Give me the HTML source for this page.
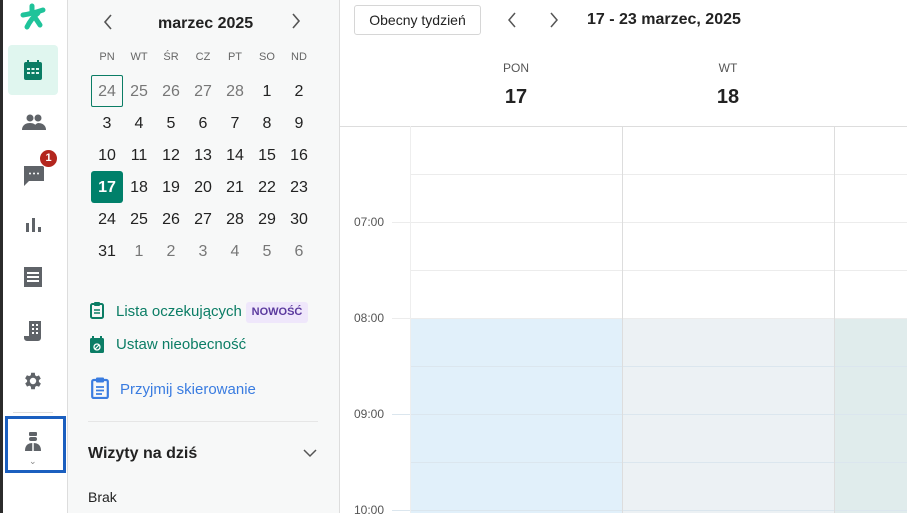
<!DOCTYPE html>
<html><head><meta charset="utf-8"><style>
*{margin:0;padding:0;box-sizing:border-box}
body{width:907px;height:513px;overflow:hidden;font-family:"Liberation Sans",sans-serif;background:#fff;position:relative;color:#222}
.abs{position:absolute}
.side{left:0;top:0;width:68px;height:513px;background:#fff;border-left:3px solid #2b2b2b;border-right:1px solid #ddd}
.panel{left:68px;top:0;width:272px;height:513px;background:#f7f8f8;border-right:1px solid #ddd}
.cal .c{position:absolute;width:32px;text-align:center;font-size:16px}
.cal .hd{font-size:11px;color:#666}
.grey{color:#777}
.hl{position:absolute;left:410px;right:0;height:1px;background:#ececec}
.vl{position:absolute;top:126px;bottom:0;width:1px;background:#ddd}
.t{position:absolute;left:354px;font-size:12px;color:#555}
.ic{position:absolute}
</style></head><body>
<div class="abs side"></div>
<!-- logo -->
<svg class="ic" style="left:19px;top:3px" width="28" height="28" viewBox="0 0 28 28"><g stroke="#1fc39a" stroke-width="5" stroke-linecap="round" fill="none"><path d="M13 3v5"/><path d="M4 12c7-1 14-3 20-5"/><path d="M8 24c3-6 6-10 11-14"/><path d="M17 16l4 6"/></g></svg>
<div class="abs" style="left:8px;top:45px;width:50px;height:50px;background:#e0f6ef;border-radius:4px"></div>
<svg class="ic" style="left:23px;top:59px" width="20" height="22" viewBox="0 0 20 22"><rect x="1" y="3" width="18" height="18" rx="2" fill="#0b7d65"/><rect x="4" y="1" width="2" height="4" fill="#0b7d65"/><rect x="14" y="1" width="2" height="4" fill="#0b7d65"/><g fill="#e0f6ef"><rect x="4" y="9" width="3" height="2"/><rect x="8.5" y="9" width="3" height="2"/><rect x="13" y="9" width="3" height="2"/><rect x="4" y="13" width="3" height="2"/><rect x="8.5" y="13" width="3" height="2"/><rect x="13" y="13" width="3" height="2"/></g></svg>
<svg class="ic" style="left:22px;top:113px" width="24" height="18" viewBox="0 0 24 18"><g fill="#5f6368"><circle cx="8" cy="5" r="3.5"/><circle cx="16" cy="5" r="3.5"/><path d="M0 17c0-5 4-7 8-7s7 2 7 7z"/><path d="M12 17c0-4 1-6 4-7 4 0 8 2 8 7z"/></g></svg>
<svg class="ic" style="left:23px;top:164px" width="22" height="22" viewBox="0 0 22 22"><path d="M1 2h20v15H6l-5 5z" fill="#5f6368"/><g fill="#fff"><circle cx="7" cy="9.5" r="1"/><circle cx="11" cy="9.5" r="1"/><circle cx="15" cy="9.5" r="1"/></g></svg>
<div class="abs" style="left:39px;top:149px;width:19px;height:19px;border-radius:50%;background:#b3261e;border:1.5px solid #fff;color:#fff;font-size:11px;font-weight:bold;text-align:center;line-height:16px">1</div>
<svg class="ic" style="left:25px;top:217px" width="16" height="16" viewBox="0 0 16 16"><g fill="#5f6368"><rect x="1" y="6" width="3" height="9"/><rect x="7" y="1" width="3" height="14"/><rect x="13" y="10" width="3" height="5"/></g></svg>
<svg class="ic" style="left:24px;top:267px" width="18" height="20" viewBox="0 0 18 20"><rect x="0" y="0" width="18" height="20" fill="#5f6368"/><g fill="#fff"><rect x="3" y="5" width="12" height="2"/><rect x="3" y="9" width="12" height="2"/><rect x="3" y="13" width="12" height="2"/></g></svg>
<svg class="ic" style="left:24px;top:320px" width="18" height="22" viewBox="0 0 18 22"><path d="M5 1h12v17a3 3 0 0 1-3 3H3a3 3 0 0 1-3-3v-2h5z" fill="#5f6368"/><g fill="#fff"><rect x="8" y="4" width="2" height="2"/><rect x="12" y="4" width="2" height="2"/><rect x="8" y="8" width="2" height="2"/><rect x="12" y="8" width="2" height="2"/><rect x="8" y="12" width="2" height="2"/><rect x="12" y="12" width="2" height="2"/></g></svg>
<svg class="ic" style="left:22px;top:370px" width="22" height="22" viewBox="0 0 24 24"><path fill="#5f6368" d="M19.4 13a7.5 7.5 0 0 0 0-2l2.1-1.6-2-3.5-2.5 1a7 7 0 0 0-1.7-1L15 3h-4l-.4 2.7a7 7 0 0 0-1.7 1l-2.5-1-2 3.5L6.6 11a7.5 7.5 0 0 0 0 2l-2.1 1.6 2 3.5 2.5-1a7 7 0 0 0 1.7 1L11 21h4l.4-2.7a7 7 0 0 0 1.7-1l2.5 1 2-3.5zM13 15.5a3.5 3.5 0 1 1 0-7 3.5 3.5 0 0 1 0 7z" transform="translate(-1 0)"/></svg>
<div class="abs" style="left:13px;top:412px;width:40px;height:1px;background:#ddd"></div>
<div class="abs" style="left:5px;top:416px;width:61px;height:57px;border:3px solid #1b5fbf"></div>
<svg class="ic" style="left:24px;top:432px" width="18" height="20" viewBox="0 0 18 20"><g fill="#5f6368"><rect x="5" y="0" width="8" height="4" rx="1"/><rect x="5" y="5" width="8" height="4" rx="2"/><path d="M1 19c0-6 3-8 8-8s8 2 8 8z"/></g><path d="M9 11v8" stroke="#fff" stroke-width="1.5"/></svg>
<div class="abs" style="left:29px;top:456px;font-size:9px;color:#888">⌄</div>

<div class="abs panel"></div>
<svg class="ic" style="left:103px;top:14px" width="10" height="16" viewBox="0 0 10 16"><path d="M8 1L2 8l6 7" stroke="#555" stroke-width="1.6" fill="none"/></svg>
<svg class="ic" style="left:291px;top:13px" width="10" height="16" viewBox="0 0 10 16"><path d="M2 1l6 7-6 7" stroke="#555" stroke-width="1.6" fill="none"/></svg>
<div class="abs" style="left:158px;top:15px;font-size:16px;font-weight:bold;color:#222">marzec 2025</div>
<div class="cal">
<div class="c hd" style="left:91px;top:51px">PN</div><div class="c hd" style="left:123px;top:51px">WT</div><div class="c hd" style="left:155px;top:51px">ŚR</div><div class="c hd" style="left:187px;top:51px">CZ</div><div class="c hd" style="left:219px;top:51px">PT</div><div class="c hd" style="left:251px;top:51px">SO</div><div class="c hd" style="left:283px;top:51px">ND</div>
<div class="abs" style="left:91px;top:75px;width:32px;height:32px;border:1px solid #0b7d65;border-radius:2px"></div>
<div class="abs" style="left:91px;top:171px;width:32px;height:32px;background:#00806a;border-radius:3px"></div>
<div class="c grey" style="left:91px;top:83px">24</div><div class="c grey" style="left:123px;top:83px">25</div><div class="c grey" style="left:155px;top:83px">26</div><div class="c grey" style="left:187px;top:83px">27</div><div class="c grey" style="left:219px;top:83px">28</div><div class="c" style="left:251px;top:83px">1</div><div class="c" style="left:283px;top:83px">2</div>
<div class="c" style="left:91px;top:115px">3</div><div class="c" style="left:123px;top:115px">4</div><div class="c" style="left:155px;top:115px">5</div><div class="c" style="left:187px;top:115px">6</div><div class="c" style="left:219px;top:115px">7</div><div class="c" style="left:251px;top:115px">8</div><div class="c" style="left:283px;top:115px">9</div>
<div class="c" style="left:91px;top:147px">10</div><div class="c" style="left:123px;top:147px">11</div><div class="c" style="left:155px;top:147px">12</div><div class="c" style="left:187px;top:147px">13</div><div class="c" style="left:219px;top:147px">14</div><div class="c" style="left:251px;top:147px">15</div><div class="c" style="left:283px;top:147px">16</div>
<div class="c" style="left:91px;top:179px;color:#fff;font-weight:bold">17</div><div class="c" style="left:123px;top:179px">18</div><div class="c" style="left:155px;top:179px">19</div><div class="c" style="left:187px;top:179px">20</div><div class="c" style="left:219px;top:179px">21</div><div class="c" style="left:251px;top:179px">22</div><div class="c" style="left:283px;top:179px">23</div>
<div class="c" style="left:91px;top:211px">24</div><div class="c" style="left:123px;top:211px">25</div><div class="c" style="left:155px;top:211px">26</div><div class="c" style="left:187px;top:211px">27</div><div class="c" style="left:219px;top:211px">28</div><div class="c" style="left:251px;top:211px">29</div><div class="c" style="left:283px;top:211px">30</div>
<div class="c" style="left:91px;top:243px">31</div><div class="c grey" style="left:123px;top:243px">1</div><div class="c grey" style="left:155px;top:243px">2</div><div class="c grey" style="left:187px;top:243px">3</div><div class="c grey" style="left:219px;top:243px">4</div><div class="c grey" style="left:251px;top:243px">5</div><div class="c grey" style="left:283px;top:243px">6</div>
</div>
<svg class="ic" style="left:90px;top:302px" width="14" height="17" viewBox="0 0 14 17"><rect x="1" y="2" width="12" height="14" rx="1.5" fill="none" stroke="#0b7d65" stroke-width="2"/><rect x="4" y="0" width="6" height="4" rx="1" fill="#0b7d65"/><path d="M4 8h6M4 11h6" stroke="#0b7d65" stroke-width="1.5"/></svg>
<div class="abs" style="left:116px;top:303px;font-size:15px;color:#0b7d65">Lista oczekujących</div>
<div class="abs" style="left:246px;top:302px;width:62px;height:21px;background:#efe7fb;border-radius:3px;color:#5b3a9e;font-size:11px;font-weight:bold;text-align:center;line-height:21px">NOWOŚĆ</div>
<svg class="ic" style="left:90px;top:336px" width="14" height="17" viewBox="0 0 14 17"><rect x="0" y="2" width="14" height="15" rx="1.5" fill="#0b7d65"/><rect x="2" y="0" width="2" height="3" fill="#0b7d65"/><rect x="10" y="0" width="2" height="3" fill="#0b7d65"/><circle cx="7" cy="11" r="3" fill="none" stroke="#fff" stroke-width="1.3"/><path d="M5 13l4-4" stroke="#fff" stroke-width="1.2"/></svg>
<div class="abs" style="left:116px;top:336px;font-size:15px;color:#0b7d65">Ustaw nieobecność</div>
<svg class="ic" style="left:91px;top:377px" width="18" height="22" viewBox="0 0 18 22"><rect x="1.2" y="3" width="15.6" height="18" rx="1.5" fill="none" stroke="#3a7ce0" stroke-width="2.2"/><rect x="5" y="0.5" width="8" height="5" rx="1" fill="#3a7ce0"/><path d="M5 10h8M5 13.5h8M5 17h6" stroke="#3a7ce0" stroke-width="1.8"/></svg>
<div class="abs" style="left:120px;top:381px;font-size:15px;color:#3a7ce0">Przyjmij skierowanie</div>
<div class="abs" style="left:88px;top:421px;width:230px;height:1px;background:#e6e6e6"></div>
<div class="abs" style="left:88px;top:445px;font-size:16px;font-weight:bold;color:#222">Wizyty na dziś</div>
<svg class="ic" style="left:303px;top:449px" width="14" height="9" viewBox="0 0 14 9"><path d="M1 1l6 6 6-6" stroke="#555" stroke-width="1.5" fill="none"/></svg>
<div class="abs" style="left:88px;top:489px;font-size:14px;color:#222">Brak</div>

<!-- main -->
<div class="abs" style="left:354px;top:5px;width:127px;height:30px;border:1px solid #d6d6d6;border-radius:3px;font-size:14px;text-align:center;line-height:28px;color:#222">Obecny tydzień</div>
<svg class="ic" style="left:507px;top:12px" width="10" height="16" viewBox="0 0 10 16"><path d="M8 1L2 8l6 7" stroke="#555" stroke-width="1.5" fill="none"/></svg>
<svg class="ic" style="left:549px;top:12px" width="10" height="16" viewBox="0 0 10 16"><path d="M2 1l6 7-6 7" stroke="#555" stroke-width="1.5" fill="none"/></svg>
<div class="abs" style="left:587px;top:11px;font-size:16px;font-weight:bold;color:#222">17 - 23 marzec, 2025</div>
<div class="abs" style="left:476px;top:61px;width:80px;text-align:center;font-size:12px;color:#555">PON</div>
<div class="abs" style="left:476px;top:86px;width:80px;text-align:center;font-size:20px;font-weight:bold;color:#222">17</div>
<div class="abs" style="left:688px;top:61px;width:80px;text-align:center;font-size:12px;color:#555">WT</div>
<div class="abs" style="left:688px;top:86px;width:80px;text-align:center;font-size:20px;font-weight:bold;color:#222">18</div>
<div class="abs" style="left:340px;top:126px;width:567px;height:1px;background:#ddd"></div>
<div class="abs" style="left:410px;top:318px;width:212px;height:195px;background:#e1f0fa"></div>
<div class="abs" style="left:622px;top:318px;width:212px;height:195px;background:#ecf1f4"></div>
<div class="abs" style="left:834px;top:318px;width:73px;height:195px;background:#e0ecec"></div>
<div class="hl" style="top:174px"></div><div class="hl" style="top:222px;left:392px"></div><div class="hl" style="top:270px"></div><div class="hl" style="top:318px;left:392px"></div><div class="hl" style="top:366px;background:#dbe6ee"></div><div class="hl" style="top:414px;left:392px;background:#dbe6ee"></div><div class="hl" style="top:462px;background:#dbe6ee"></div><div class="hl" style="top:510px;left:392px;background:#dbe6ee"></div>
<div class="vl" style="left:410px;background:#eee"></div><div class="vl" style="left:622px"></div><div class="vl" style="left:834px"></div>
<div class="t" style="top:215px">07:00</div><div class="t" style="top:311px">08:00</div><div class="t" style="top:407px">09:00</div><div class="t" style="top:503px">10:00</div>
</body></html>
